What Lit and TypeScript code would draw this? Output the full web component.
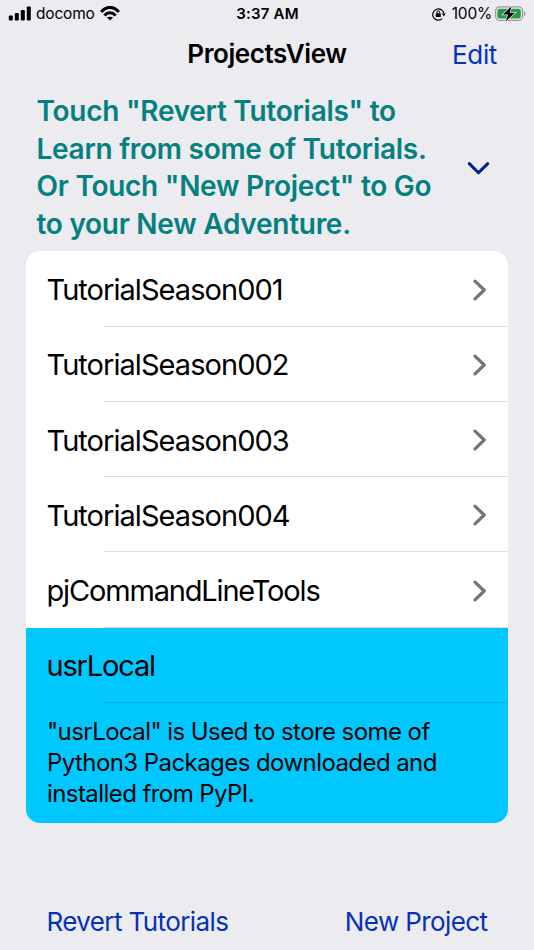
import { LitElement, html, css } from "lit";
import { customElement } from "lit/decorators.js";

@customElement("status-bar")
class StatusBar extends LitElement {
  static styles = css`
    :host { display: grid; grid-template-columns: 1fr auto 1fr; align-items: center; height: 28px; box-sizing: border-box; padding: 0 7px 0 8px; font-size: 15.5px; line-height: 28px; color: #000; }
    .side { display: flex; align-items: center; }
    .end { justify-content: flex-end; }
    .carrier { margin: 0 5.5px 0 5px; letter-spacing: -0.2px; }
    .time { font-weight: 600; font-size: 15px; letter-spacing: 0.2px; }
    .percent { margin: 0 3px 0 6px; letter-spacing: -0.2px; }
    svg { display: block; flex: none; }
  `;
  render() {
    return html`
      <div class="side">
        <svg width="23" height="16" viewBox="0 0 23 16">
          <rect x="0.8" y="9.4" width="4" height="5" rx="1.2" /><rect x="6.8" y="7" width="4" height="7.4" rx="1.2" />
          <rect x="12.8" y="4" width="4" height="10.4" rx="1.2" /><rect x="18.8" y="0.4" width="4" height="14" rx="1.2" />
        </svg>
        <span class="carrier">docomo</span>
        <svg width="20" height="16" viewBox="0 0 20 16" fill="none" stroke="#000" stroke-width="3">
          <path d="M1.2 6C6.2-.1 13.8-.1 18.8 6M4.4 9.4c3.2-3.5 8-3.5 11.2 0" />
          <path d="M10 14.4 6.9 11.6c1.8-1.3 4.4-1.3 6.2 0Z" fill="#000" stroke="none" />
        </svg>
      </div>
      <span class="time">3:37 AM</span>
      <div class="side end">
        <svg width="14" height="14" viewBox="0 0 14 14" fill="none" stroke="#000" stroke-width="1.2">
          <path d="M10.2 11.6A5.6 5.6 0 1 1 11.9 7" />
          <path d="M9.9 6.4h4l-2 3Z" fill="#000" stroke="none" />
          <rect x="3.8" y="6.3" width="5" height="3.8" rx=".6" fill="#000" stroke="none" />
          <path d="M4.9 6.5V5.2a1.4 1.4 0 0 1 2.8 0v1.3" stroke-width="1" />
        </svg>
        <span class="percent">100%</span>
        <svg width="32" height="16" viewBox="0 0 32 16">
          <rect x=".6" y=".9" width="27" height="13.4" rx="4" fill="none" stroke="#98989c" stroke-width="1.2" />
          <rect x="2.4" y="2.7" width="23.4" height="9.8" rx="2.3" fill="#279a45" />
          <path d="M29 5.4c2.1.5 2.1 3.9 0 4.4Z" fill="#98989c" />
          <path d="M16.5.2 8 8.5h5L10.9 15.2l9.2-8.5h-5.4Z" fill="#000" stroke="#ebebf0" stroke-width="1.4" paint-order="stroke" />
        </svg>
      </div>`;
  }
}

@customElement("project-row")
class ProjectRow extends LitElement {
  static properties = { name: { type: String }, link: { type: Boolean } };
  declare name: string;
  declare link: boolean;
  static styles = css`
    :host { display: flex; align-items: center; justify-content: space-between; height: 75.25px; box-sizing: border-box; padding: 1px 21.5px 0 20.5px; background: linear-gradient(#00000020, #00000020) 77.5px 100% / 100% 1px no-repeat; font-size: 29px; letter-spacing: var(--tracking, -0.95px); }
    svg { display: block; }
  `;
  render() {
    return html`<span>${this.name}</span>
      ${this.link
        ? html`<svg width="14" height="22" viewBox="0 0 14 22" fill="none" stroke="#747479" stroke-width="3.2" stroke-linecap="round" stroke-linejoin="round"><path d="M2 2.2 11.2 11l-9.2 8.8" /></svg>`
        : null}`;
  }
}

@customElement("app-root")
class AppRoot extends LitElement {
  static styles = css`
    :host { display: flex; flex-direction: column; width: 534px; height: 950px; overflow: hidden; background: #ebebf0; font-family: Inter, "Liberation Sans", sans-serif; color: #000; }
    .nav { display: grid; grid-template-columns: 1fr auto 1fr; align-items: center; height: 50px; padding: 0 37px; font-size: 26px; }
    .title { font-weight: 600; letter-spacing: -0.4px; }
    .edit { justify-self: end; color: #0433b4; padding-top: 3px; letter-spacing: -0.35px; }
    .hint { display: flex; align-items: center; justify-content: space-between; margin: 15.3px 44px 8.2px 36.5px; height: 150px; color: #058080; }
    .hint p { margin: 0; font-size: 28px; line-height: 37.5px; font-weight: 600; letter-spacing: -0.27px; white-space: nowrap; }
    .list { margin: 0 26px; border-radius: 14px; overflow: hidden; background: #fff; }
    .wordy { --tracking: -1.17px; }
    .local { background: #00c8ff; padding-bottom: 14px; }
    .note { margin: 0; padding: 13px 21px 0; font-size: 24px; line-height: 31px; letter-spacing: -0.57px; white-space: nowrap; }
    .actions { display: flex; justify-content: space-between; margin: auto 46.5px 11px; font-size: 26px; line-height: 34px; letter-spacing: -0.6px; color: #0433b4; }
  `;
  private names = ["TutorialSeason001", "TutorialSeason002", "TutorialSeason003", "TutorialSeason004"];
  render() {
    return html`
      <status-bar></status-bar>
      <header class="nav"><span></span><span class="title">ProjectsView</span><span class="edit">Edit</span></header>
      <section class="hint">
        <p>Touch "Revert Tutorials" to<br />Learn from some of Tutorials.<br />Or Touch "New Project" to Go<br />to your New Adventure.</p>
        <svg width="23" height="14" viewBox="0 0 23 14" fill="none" stroke="#001d91" stroke-width="3" stroke-linecap="round" stroke-linejoin="round"><path d="m2.3 2.6 9.2 9.2 9.2-9.2" /></svg>
      </section>
      <main class="list">
        ${this.names.map((n) => html`<project-row .name=${n} .link=${true}></project-row>`)}
        <project-row class="wordy" .name=${"pjCommandLineTools"} .link=${true}></project-row>
        <div class="local">
          <project-row class="wordy" .name=${"usrLocal"}></project-row>
          <p class="note">"usrLocal" is Used to store some of<br />Python3 Packages downloaded and<br />installed from PyPI.</p>
        </div>
      </main>
      <footer class="actions"><span>Revert Tutorials</span><span>New Project</span></footer>`;
  }
}
